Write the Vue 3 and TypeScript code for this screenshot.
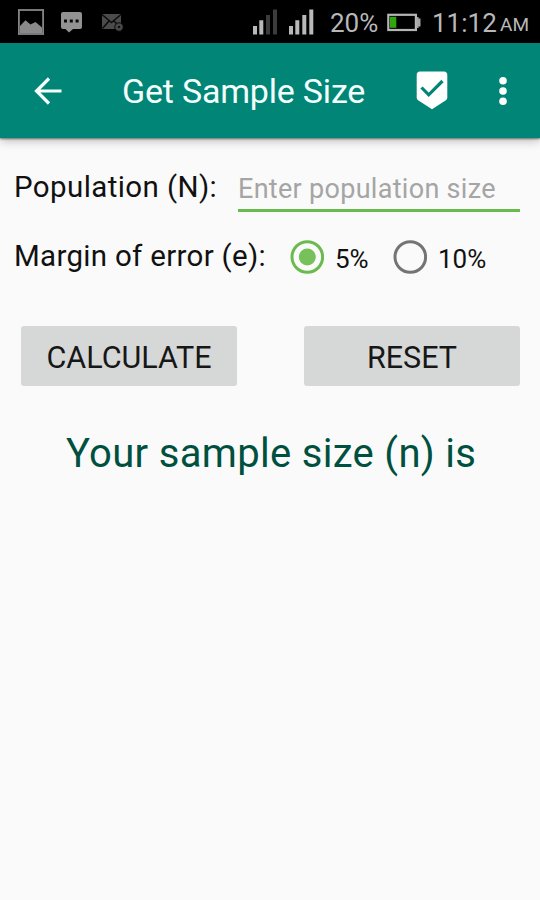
<script setup lang="ts">
import { ref } from 'vue'

const population = ref<string>('')
const margin = ref<number>(5)
const result = ref<string>('')
const options: number[] = [5, 10]

function calculate(): void {
  const n = Number(population.value)
  const e = margin.value / 100
  result.value = n > 0 ? ' ' + Math.ceil(n / (1 + n * e * e)) : ''
}

function reset(): void {
  population.value = ''
  margin.value = 5
  result.value = ''
}
</script>

<template>
  <div class="screen">
    <div class="status">
      <svg class="notices" width="130" height="43" viewBox="0 0 130 43">
        <rect x="18.900" y="10" width="24.200" height="24" fill="none" stroke="#858585" stroke-width="1.800" />
        <path d="M20 33V26L25.500 20.300L30.500 24.500L35.500 22L42 27.500V33Z" fill="#8a8a8a" />
        <path d="M63 12H80Q82 12 82 14V27Q82 29 80 29H73L69 32.500L65.500 29H63Q61 29 61 27V14Q61 12 63 12Z" fill="#929292" />
        <path d="M64 19.500H67V22.500H64ZM69.800 19.500H72.800V22.500H69.800ZM75.600 19.500H78.600V22.500H75.600Z" fill="#080808" />
        <rect x="102" y="14" width="19" height="15" fill="#4b4b4b" />
        <path d="M102 14.500L111.500 22.500L121 14.500M102.500 28.500L109 21M120.500 28L114 21" fill="none" stroke="#0c0c0c" stroke-width="1.500" />
        <circle cx="119" cy="27" r="4.200" fill="#4b4b4b" stroke="#080808" stroke-width="1" />
        <circle cx="119" cy="27" r="1.300" fill="#111" />
      </svg>
      <svg class="signals" width="66" height="43" viewBox="0 0 66 43">
        <path d="M1 26H5V34.500H1ZM7.300 20.300H11.300V34.500H7.300Z" fill="#b9b9b9" />
        <path d="M14 15H18V34.500H14ZM21 9.500H25V34.500H21Z" fill="#3c3c3c" />
        <path d="M37 26H41V34.500H37ZM43.300 20.300H47.300V34.500H43.300ZM50.300 15H54.300V34.500H50.300ZM57.300 9.500H61.300V34.500H57.300Z" fill="#b9b9b9" />
      </svg>
      <span class="percent">20%</span>
      <svg class="battery" width="34" height="43" viewBox="0 0 34 43">
        <rect x="1.300" y="14.800" width="27.600" height="15.200" fill="none" stroke="#b5b5b5" stroke-width="2.200" />
        <path d="M29.500 17H31.500V18.500H33.500V26.500H31.500V28H29.500Z" fill="#a5a5a5" />
        <rect x="3" y="16.800" width="6.300" height="11" fill="#2fa60d" />
      </svg>
      <span class="clock">11:12</span>
      <span class="ampm">AM</span>
    </div>

    <header class="bar">
      <svg class="back" width="30" height="28" viewBox="0 0 30 28">
        <path d="M28.500 14H4M16 1.500L3.500 14L16 26.500" fill="none" stroke="#f6fffd" stroke-width="3.200" />
      </svg>
      <h1 class="title">Get Sample Size</h1>
      <svg class="badge" width="32" height="39" viewBox="0 0 32 39">
        <path d="M4 0.500H28Q31.300 0.500 31.300 4V26.500Q31.300 28.300 29.500 29.500L16 38.200L2.500 29.500Q0.700 28.300 0.700 26.500V4Q0.700 0.500 4 0.500Z" fill="#fff" />
        <path d="M5.500 16.500L12.700 23.800L26.500 10" fill="none" stroke="#008577" stroke-width="3.200" />
      </svg>
      <svg class="more" width="8" height="30" viewBox="0 0 8 30">
        <circle cx="4" cy="4.700" r="3.800" fill="#fff" />
        <circle cx="4" cy="15" r="3.800" fill="#fff" />
        <circle cx="4" cy="25.200" r="3.800" fill="#fff" />
      </svg>
    </header>

    <main class="content">
      <div class="row population">
        <label class="label pop-label" for="population">Population (N):</label>
        <input id="population" v-model="population" class="field" placeholder="Enter population size" inputmode="numeric" />
      </div>
      <div class="row margin">
        <span class="label margin-label">Margin of error (e):</span>
        <label v-for="o in options" :key="o" class="option">
          <input v-model="margin" class="native" type="radio" name="margin" :value="o" />
          <svg class="radio" :class="{ on: margin === o }" width="34" height="34" viewBox="0 0 34 34">
            <circle class="ring" cx="17.300" cy="17" r="15.300" />
            <circle v-if="margin === o" class="dot" cx="17.300" cy="17" r="8.500" />
          </svg>
          <span class="option-text">{{ o }}%</span>
        </label>
      </div>
      <div class="row actions">
        <button class="action" type="button" @click="calculate">CALCULATE</button>
        <button class="action" type="button" @click="reset">RESET</button>
      </div>
      <p class="result">Your sample size (n) is{{ result }}</p>
    </main>
  </div>
</template>

<style>
body {
  margin: 0;
  background: #fafafa;
}
</style>

<style scoped>
.screen {
  display: flex;
  flex-direction: column;
  width: 540px;
  height: 900px;
  overflow: hidden;
  background: #fafafa;
  color: #111;
  font-family: Roboto, "Liberation Sans", sans-serif;
  white-space: nowrap;
}
.screen * {
  box-sizing: border-box;
}
.screen svg {
  display: block;
  flex: none;
}
.status {
  display: flex;
  flex: none;
  height: 43px;
  background: #000;
  color: #b8b8b8;
  font-size: 26px;
  line-height: 46px;
}
.signals {
  margin-left: 122px;
}
.percent {
  width: 49px;
  margin-left: 12px;
}
.battery {
  margin-left: 8px;
}
.clock {
  width: 68px;
  margin-left: 11px;
}
.ampm {
  font-size: 19px;
  line-height: 50px;
}
.bar {
  display: flex;
  flex: none;
  align-items: center;
  height: 95px;
  padding: 0 33px;
  background: #008577;
  box-shadow: 0 1px 2px rgba(0, 0, 0, 0.5), 0 4px 9px rgba(0, 0, 0, 0.2);
}
.title {
  width: 249px;
  margin: 0 0 0 59px;
  color: #f4fffd;
  font-size: 34px;
  font-weight: 400;
  letter-spacing: -0.2px;
  line-height: 40px;
}
.badge {
  margin-left: 45px;
}
.more {
  margin-left: 51px;
}
.content {
  display: flex;
  flex-direction: column;
  padding: 31px 20px 0 14px;
}
.row {
  display: flex;
}
.population {
  height: 43px;
}
.label {
  font-size: 29.5px;
  letter-spacing: 0.3px;
  line-height: 37px;
}
.pop-label {
  width: 224px;
  letter-spacing: 0.4px;
}
.field {
  width: 282px;
  height: 43px;
  padding: 0 0 1px 0;
  border: 0;
  border-bottom: 3px solid #6abb4e;
  outline: 0;
  background: transparent;
  color: #111;
  font: 27px/37px Roboto, "Liberation Sans", sans-serif;
  letter-spacing: 0.3px;
}
.field::placeholder {
  color: #a5a5a5;
  opacity: 1;
}
.margin {
  align-items: center;
  height: 38px;
  margin-top: 26px;
}
.margin-label {
  width: 276px;
  margin-top: -2px;
}
.option {
  display: flex;
  align-items: center;
  width: 103px;
}
.native {
  display: none;
}
.ring {
  fill: none;
  stroke: #747474;
  stroke-width: 3;
}
.on .ring {
  stroke: #6abb4e;
}
.dot {
  fill: #76c15a;
}
.option-text {
  margin-top: 3px;
  margin-left: 11px;
  font-size: 26px;
  line-height: 36px;
}
.actions {
  justify-content: space-between;
  margin-top: 49.5px;
  padding-left: 7px;
}
.action {
  width: 216px;
  height: 60.5px;
  padding: 4px 0 0;
  border: 0;
  border-radius: 3px;
  background: #d6d8d7;
  color: #171717;
  font: 30.5px/36px Roboto, "Liberation Sans", sans-serif;
}
.result {
  margin: 43px 0 0;
  padding-left: 52px;
  color: #00503f;
  font-size: 40px;
  letter-spacing: 0.32px;
  line-height: 50px;
}
</style>
